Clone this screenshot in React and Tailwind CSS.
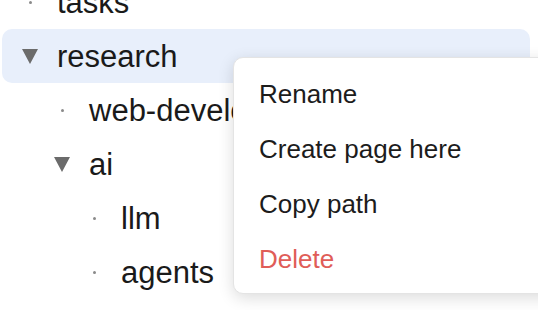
import React from "react";

const rows = [
  { label: "tasks", level: 0, type: "leaf" },
  { label: "research", level: 0, type: "open", active: true },
  { label: "web-development", level: 1, type: "leaf" },
  { label: "ai", level: 1, type: "open" },
  { label: "llm", level: 2, type: "leaf" },
  { label: "agents", level: 2, type: "leaf" },
];

const padClass = ["pl-[12px]", "pl-[44px]", "pl-[76px]"];

function Row({ row }) {
  return (
    <div
      className={`flex items-center h-[54px] w-[528px] rounded-[10px] whitespace-nowrap ${padClass[row.level]} ${
        row.active ? "bg-[#e8effb]" : ""
      }`}
    >
      <div className="w-[32px] h-[54px] flex items-center justify-center shrink-0">
        {row.type === "open" ? (
          <svg width="16" height="15" viewBox="0 0 16 15">
            <polygon points="0,0 16,0 8,15" fill="#6b6b6b" />
          </svg>
        ) : (
          <div className="w-[3px] h-[3px] rounded-full bg-[#8a8a8a]" />
        )}
      </div>
      <span className="ml-[11px] text-[31px] text-[#1a1a1a] leading-none">{row.label}</span>
    </div>
  );
}

export default function App() {
  return (
    <div className="relative w-[538px] h-[310px] overflow-hidden bg-white" style={{ fontFamily: '"Liberation Sans", Arial, sans-serif' }}>
      <div className="flex flex-col px-[2px] -mt-[25px]">
        {rows.map((r) => (
          <Row key={r.label} row={r} />
        ))}
      </div>
      <div className="absolute left-[233px] top-[57px] w-[340px] bg-white rounded-[10px] border border-[#e4e4e4] shadow-[0_4px_16px_rgba(0,0,0,0.14)] pt-[8px] pb-[7px] flex flex-col">
        {[
          ["Rename", "text-[#1c1c1c]"],
          ["Create page here", "text-[#1c1c1c]"],
          ["Copy path", "text-[#1c1c1c]"],
          ["Delete", "text-[#e05d58]"],
        ].map(([t, c]) => (
          <div key={t} className={`h-[55px] flex items-center px-[25px] text-[26px] leading-none ${c}`}>
            {t}
          </div>
        ))}
      </div>
    </div>
  );
}
